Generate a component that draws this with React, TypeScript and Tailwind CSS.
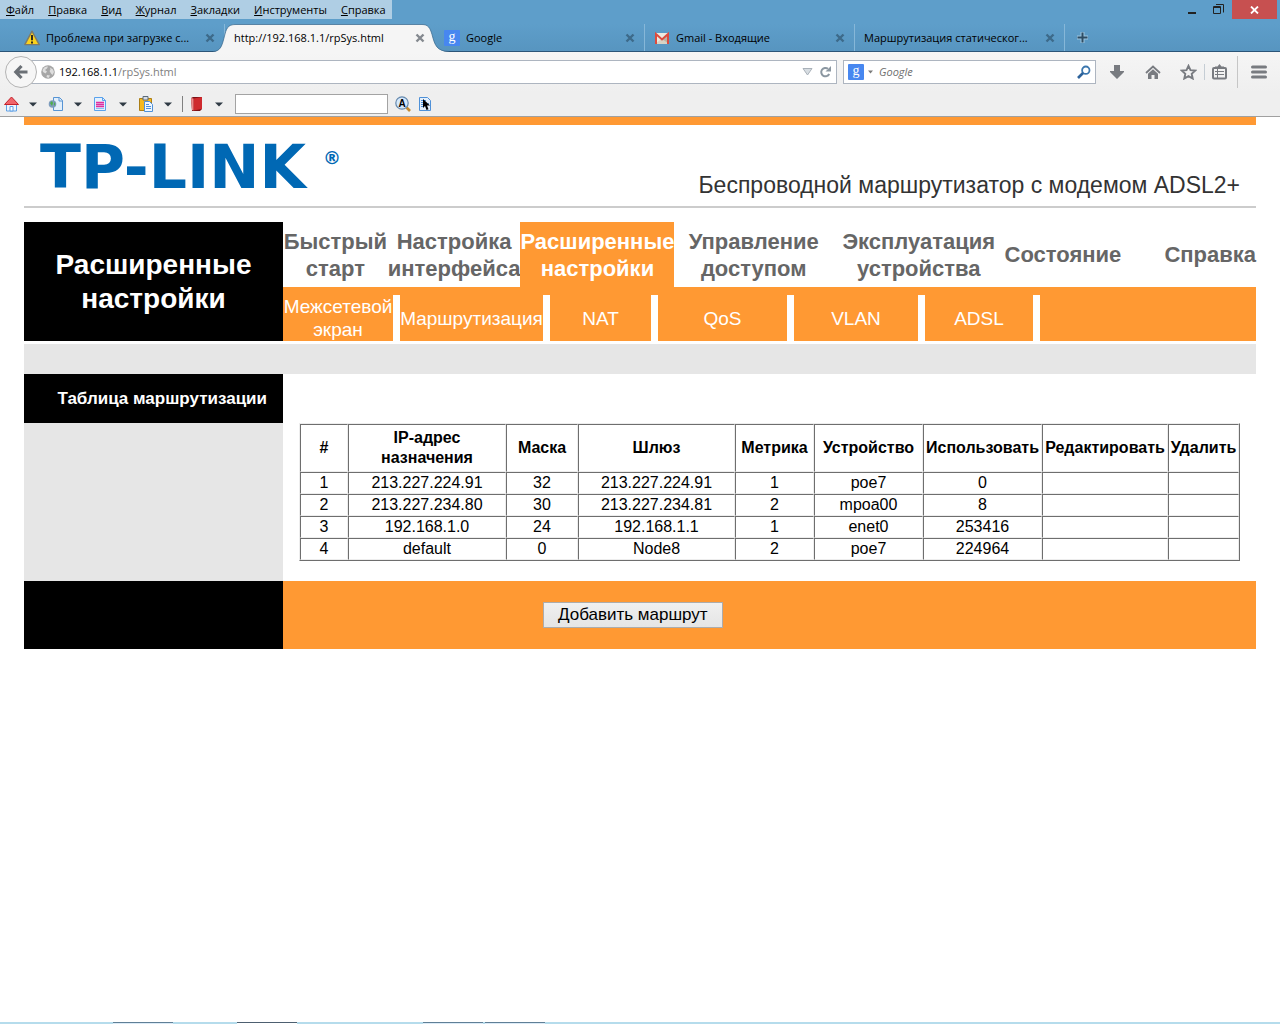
import type { ReactNode } from "react";

const menuItems = [
  ["Ф", "айл"],
  ["П", "равка"],
  ["В", "ид"],
  ["Ж", "урнал"],
  ["З", "акладки"],
  ["И", "нструменты"],
  ["С", "правка"],
];

const sections = [
  "Быстрый старт",
  "Настройка интерфейса",
  "Расширенные настройки",
  "Управление доступом",
  "Эксплуатация устройства",
  "Состояние",
  "Справка",
];

const subsections = ["Межсетевой экран", "Маршрутизация", "NAT", "QoS", "VLAN", "ADSL"];

const columns = [
  { title: "#", width: "w-[48px]" },
  { title: "IP-адрес назначения", width: "w-[158px]" },
  { title: "Маска", width: "w-[72px]" },
  { title: "Шлюз", width: "w-[157px]" },
  { title: "Метрика", width: "w-[79px]" },
  { title: "Устройство", width: "w-[109px]" },
  { title: "Использовать", width: "w-[119px]" },
  { title: "Редактировать", width: "w-[126px]" },
  { title: "Удалить", width: "w-[71px]" },
];

const routes = [
  ["1", "213.227.224.91", "32", "213.227.224.91", "1", "poe7", "0", "", ""],
  ["2", "213.227.234.80", "30", "213.227.234.81", "2", "mpoa00", "8", "", ""],
  ["3", "192.168.1.0", "24", "192.168.1.1", "1", "enet0", "253416", "", ""],
  ["4", "default", "0", "Node8", "2", "poe7", "224964", "", ""],
];

function GoogleIcon() {
  return (
    <svg width="16" height="16" viewBox="0 0 16 16" className="shrink-0">
      <rect width="16" height="16" rx="1" fill="#4787f0" />
      <text x="8" y="11" textAnchor="middle" fontFamily="Liberation Serif, serif" fontSize="14" fill="#fff">
        g
      </text>
    </svg>
  );
}

function WarningIcon() {
  return (
    <svg width="16" height="16" viewBox="0 0 16 16" className="shrink-0">
      <path d="M8 1.2 15.2 14.6H.8Z" fill="#fbd21c" stroke="#7d7a68" strokeWidth="1.4" strokeLinejoin="round" />
      <path d="M8 5v5.2M8 11.6v1.8" stroke="#1c1c1c" strokeWidth="1.8" />
    </svg>
  );
}

function GmailIcon() {
  return (
    <svg width="16" height="16" viewBox="0 0 16 16" className="shrink-0">
      <path d="M1 3h14v11H1Z" fill="#ece9e0" />
      <path d="m1 14 7-5.500L15 14Z" fill="#d8d3c5" />
      <path d="M8 9 15 3v11Z" fill="#b9b4a6" />
      <path d="M2 14V4l6 5.500L14 4v10" fill="none" stroke="#dd4b3e" strokeWidth="2" />
    </svg>
  );
}

function CloseIcon() {
  return (
    <svg width="10" height="10" viewBox="0 0 10 10">
      <path d="m1.500 1.500 7 7m0-7-7 7" stroke="currentColor" strokeWidth="2.400" />
    </svg>
  );
}

function Tab({ title, icon, active }: { title: string; icon?: ReactNode; active?: boolean }) {
  return (
    <div
      className={
        active
          ? "relative z-10 flex w-[210px] items-center pr-[10px] pl-[9px]"
          : "flex w-[210px] items-center border-r border-[#86b7d8] px-[9px]"
      }
    >
      {active && (
        <svg className="absolute top-0 -left-3 -z-10" width="236" height="29" viewBox="0 0 236 29">
          <path
            d="M0 28C8 27 9 22 12 10 14 2 17 .5 23 .5H209c6 0 8 3 10 10C222 22 224 27 236 28v1H0Z"
            fill="#f5f5f5"
          />
          <path
            d="M0 27.500C8 27 9 22 12 10 14 2 17 .5 23 .5H209c6 0 8 3 10 10C222 22 224 27 236 27.500"
            fill="none"
            stroke="#35658a"
            strokeOpacity=".7"
          />
        </svg>
      )}
      <a href="#" className="flex min-w-0 grow items-center gap-[6px]">
        {icon}
        <span className="truncate">{title}</span>
      </a>
      <button aria-label="Закрыть вкладку" className={active ? "text-[#84898f]" : "text-[#3d6a8a]"}>
        <CloseIcon />
      </button>
    </div>
  );
}

function TitleBar() {
  return (
    <div className="flex h-[24px] items-start justify-between">
      <nav className="flex h-[19px] items-center gap-[14px] bg-[#afcee4] px-[6px]">
        {menuItems.map(([key, rest]) => (
          <a key={rest + key} href="#">
            <span className="underline">{key}</span>
            {rest}
          </a>
        ))}
      </nav>
      <div className="flex h-[19px] items-center pr-[3px]">
        <button aria-label="Свернуть" className="px-2">
          <svg width="10" height="11" viewBox="0 0 10 11">
            <path d="M1 8h8v2H1Z" fill="#222" />
          </svg>
        </button>
        <button aria-label="Восстановить" className="px-2">
          <svg width="11" height="11" viewBox="0 0 11 11">
            <path d="M.5 2.500h7v7h-7ZM.5 3.500h7M3 .5h7.500v8" fill="none" stroke="#222" />
          </svg>
        </button>
        <button aria-label="Закрыть" className="flex h-[19px] w-[45px] items-center justify-center bg-[#c75050]">
          <svg width="9" height="8" viewBox="0 0 9 8">
            <path d="m1 .5 7 7m0-7-7 7" stroke="#fff" strokeWidth="1.800" />
          </svg>
        </button>
      </div>
    </div>
  );
}

function TabStrip() {
  return (
    <div className="flex h-[28px] items-stretch border-b border-[#2b5578] bg-linear-to-b from-[#5e9eca] to-[#5795c0] pl-[15px]">
      <Tab title="Проблема при загрузке с..." icon={<WarningIcon />} />
      <Tab title="http://192.168.1.1/rpSys.html" active />
      <Tab title="Google" icon={<GoogleIcon />} />
      <Tab title="Gmail - Входящие" icon={<GmailIcon />} />
      <Tab title="Маршрутизация статическог..." />
      <button aria-label="Новая вкладка" className="px-3">
        <svg width="11" height="11" viewBox="0 0 11 11">
          <path d="M5.500 0v11M0 5.500h11" stroke="#9cc5e0" strokeWidth="4" />
          <path d="M5.500 .5v10M.5 5.500h10" stroke="#2e4d63" strokeWidth="2" />
        </svg>
      </button>
    </div>
  );
}

function AddressBar() {
  return (
    <div className="flex h-[40px] items-center bg-linear-to-b from-[#f5f5f5] to-[#efefef] pr-[13px] pl-[5px]">
      <button
        aria-label="Назад"
        className="z-10 flex size-8 shrink-0 items-center justify-center rounded-full border border-[#b4b4b4] bg-[#f6f6f6]"
      >
        <svg width="16" height="16" viewBox="0 0 16 16">
          <path d="M8.500 2 2.800 8l5.700 6M3 8h11.500" fill="none" stroke="#6b7076" strokeWidth="3.200" />
        </svg>
      </button>
      <div className="-ml-2 flex h-[24px] min-w-0 grow items-center border border-[#adb5c0] bg-white pr-[5px] pl-[10px]">
        <svg width="16" height="16" viewBox="0 0 16 16" className="shrink-0">
          <circle cx="8" cy="8" r="6.800" fill="#a6a6a6" />
          <path
            d="M2.500 6C4 3 6 2 8 2.500L7 4.500 5 6l2 1.500L5.500 9.500 3 8ZM10 3.500l3 2L14 8l-1.500 3L11 9.500 9.500 7l1-1.500ZM7 11l3 .5L8.500 14 6.500 13Z"
            fill="#dedede"
          />
        </svg>
        <label htmlFor="address" className="pl-[3px]">
          192.168.1.1
        </label>
        <input id="address" defaultValue="/rpSys.html" className="min-w-0 grow text-[#808080] outline-none" />
        <button aria-label="Журнал адресов">
          <svg width="11" height="8" viewBox="0 0 11 8">
            <path d="M1 .5h9L5.500 7Z" fill="#d7dde2" stroke="#a9b1b9" />
          </svg>
        </button>
        <button aria-label="Обновить" className="pl-[6px]">
          <svg width="12" height="12" viewBox="0 0 12 12">
            <path d="M9 2.800A4.200 4.200 0 1 0 10.200 8" fill="none" stroke="#8b97a1" strokeWidth="2" />
            <path d="M6.500 5.500H12V0Z" fill="#8b97a1" />
          </svg>
        </button>
      </div>
      <form className="ml-[6px] flex h-[24px] w-[253px] shrink-0 items-center border border-[#adb5c0] bg-white px-1">
        <GoogleIcon />
        <svg width="5" height="4" viewBox="0 0 5 4" className="mx-1">
          <path d="M0 .5h5L2.500 3.500Z" fill="#7b7b7b" />
        </svg>
        <input
          aria-label="Поиск"
          placeholder="Google"
          className="ml-[2px] min-w-0 grow italic outline-none placeholder:text-[#6f6f6f]"
        />
        <button aria-label="Найти">
          <svg width="14" height="14" viewBox="0 0 14 14">
            <circle cx="8.800" cy="5.200" r="3.700" fill="none" stroke="#3b76ad" strokeWidth="1.800" />
            <path d="m6 8-5 5" stroke="#2d629b" strokeWidth="2.600" />
          </svg>
        </button>
      </form>
      <div className="flex shrink-0 items-center text-[#787b80]">
        <button aria-label="Загрузки" className="ml-[14px]">
          <svg width="14" height="14" viewBox="0 0 14 14">
            <path d="M4 0h6v6h4v1l-7 7-7-7V6h4Z" fill="currentColor" />
          </svg>
        </button>
        <button aria-label="Домашняя страница" className="ml-[21px]">
          <svg width="16" height="14" viewBox="0 0 16 14">
            <path d="M1 8 8 1.500 15 8" fill="none" stroke="currentColor" strokeWidth="1.800" />
            <path d="M3 8.800 8 4.300l5 4.500V14H9.500v-4h-3v4H3Z" fill="currentColor" />
          </svg>
        </button>
        <button aria-label="Добавить закладку" className="ml-[19px]">
          <svg width="17" height="16" viewBox="0 0 17 16">
            <path
              d="m8.500 1.800 2 4.300 4.700.5-3.500 3.200 1 4.700-4.200-2.400-4.200 2.400 1-4.700L1.800 6.600l4.700-.5Z"
              fill="none"
              stroke="currentColor"
              strokeWidth="1.900"
            />
          </svg>
        </button>
        <button aria-label="Закладки" className="ml-[7px] border-l border-[#c5cdd4] pl-[7px]">
          <svg width="15" height="16" viewBox="0 0 15 16">
            <path d="M3 4V2.500h2.500L7.500 0l2 2.500H12V4Z" fill="currentColor" />
            <rect x="1" y="4" width="13" height="10.500" rx="1" fill="none" stroke="currentColor" strokeWidth="2" />
            <path d="M3 7.500h9M3 10.500h9M5.500 5v9" stroke="currentColor" />
          </svg>
        </button>
        <button aria-label="Меню" className="ml-[10px] flex h-8 items-center border-l border-[#c6c6c6] pl-[13px]">
          <svg width="16" height="14" viewBox="0 0 16 14">
            <path d="M1.500 2h13m-13 5h13m-13 5h13" stroke="currentColor" strokeWidth="3" strokeLinecap="round" />
          </svg>
        </button>
      </div>
    </div>
  );
}

function DropArrow() {
  return (
    <svg width="8" height="5" viewBox="0 0 8 5">
      <path d="M0 .5h8L4 4.500Z" fill="#2f3a44" />
    </svg>
  );
}

function ToolButton({ label, children }: { label: string; children: ReactNode }) {
  return (
    <button aria-label={label} className="flex w-[45px] items-center gap-[10px]">
      <svg width="16" height="16" viewBox="0 0 16 16">
        {children}
      </svg>
      <DropArrow />
    </button>
  );
}

function ToolBar() {
  return (
    <div className="flex h-[25px] items-center border-b border-[#a0a0a0] bg-[#efefef] pl-[3px]">
      <ToolButton label="Домой">
        <path d="M3.500 8h10v7h-10Z" fill="#eef5fc" stroke="#5ea0e6" />
        <path d="M8.500 1 15.500 8.500h-14Z" fill="#f0656a" stroke="#c4222b" />
        <path d="M7 10.500h3V15H7Z" fill="#fff" stroke="#5ea0e6" />
      </ToolButton>
      <ToolButton label="Открыть страницу">
        <path d="M5.500 1.500h6l3 3v10h-9Z" fill="#e3effb" stroke="#5794d4" />
        <path d="M11 1.500V5h3.500" fill="none" stroke="#5794d4" />
        <circle cx="4.500" cy="8" r="3.800" fill="#7d9cbd" />
        <path d="M2 7l2-2 1 2-1 3M6 6l1.500 2L6 10" fill="#4fae4b" />
      </ToolButton>
      <ToolButton label="Страница">
        <path d="M1.500 1.500h8l3 3v10h-11Z" fill="#e4f0fd" stroke="#5aa2ec" />
        <path d="M9.500 1.500v3h3" fill="none" stroke="#5aa2ec" />
        <path d="M3 6.500h8M3 8.500h8m-8 2h8" stroke="#e02fa0" strokeWidth="1.400" />
        <path d="M3 12.500h8" stroke="#8cbcf0" />
      </ToolButton>
      <ToolButton label="Буфер обмена">
        <path d="M1.500 2.500h12v12h-12Z" fill="#f6b91d" stroke="#ab7e16" />
        <path d="M5 .5h5V4H5Z" fill="#d9dde2" stroke="#5a6b7c" />
        <path d="M6.500 5.500h5l3 3v7h-8Z" fill="#eff6fe" stroke="#4f91d8" />
        <path d="M8 8.500h3M8 10.500h5m-5 2h5" stroke="#4f91d8" />
      </ToolButton>
      <div className="-ml-px flex items-center border-l border-[#808080] pl-[6px]">
        <ToolButton label="Словарь">
          <path d="M2 2 4 1h9v12l-2 2H3Z" fill="#7d1116" />
          <path d="M4.500 2.500 13 1v12l-8.500 1.500Z" fill="#cf2a2e" />
          <path d="M2 2l2.500.5v12L3 14Z" fill="#f08a8a" />
        </ToolButton>
      </div>
      <input
        aria-label="Слово для перевода"
        className="ml-px h-[20px] w-[153px] border border-[#a3a3a3] bg-white px-1 outline-none"
      />
      <button aria-label="Перевести" className="ml-[7px]">
        <svg width="16" height="16" viewBox="0 0 16 16">
          <path d="m11.500 11.500 3.500 3.500" stroke="#c58a2e" strokeWidth="2.600" />
          <circle cx="7" cy="7" r="6.200" fill="#d5e8fb" stroke="#6689ad" strokeWidth="1.200" />
          <text x="7" y="10.500" textAnchor="middle" fontFamily="Liberation Sans, sans-serif" fontWeight="700" fontSize="10">
            A
          </text>
        </svg>
      </button>
      <button aria-label="Перевод под курсором" className="ml-[7px]">
        <svg width="16" height="16" viewBox="0 0 16 16">
          <path d="M1.500 1.500h8l3 3v10h-11Z" fill="#e4f0fd" stroke="#4f91d8" />
          <path d="M3 4.500h5m-5 2h2m-2 2h2m-2 2h2M10 7.500h1" stroke="#4f91d8" />
          <path d="M5 3v9l2-2 1.500 4 2-.8L9 9.500h3Z" fill="#000" />
        </svg>
      </button>
    </div>
  );
}

function Logo() {
  return (
    <svg width="304" height="72" viewBox="0 0 304 72" fill="#0068b4" fontFamily="DejaVu Sans, sans-serif">
      <text x="0" y="58" fontSize="60" fontWeight="700">
        TP-LINK
      </text>
      <text x="283" y="34" fontSize="18" fontWeight="700">
        ®
      </text>
    </svg>
  );
}

function RoutingTable() {
  return (
    <table className="w-full table-fixed border-separate border-spacing-0 border border-t-[#ededed] border-r-[#6e6e6e] border-b-[#6e6e6e] border-l-[#ededed] text-center text-[16px] leading-[20px]">
      <colgroup>
        {columns.map((col) => (
          <col key={col.title} className={col.width} />
        ))}
      </colgroup>
      <thead>
        <tr className="h-[48px]">
          {columns.map((col) => (
            <th
              key={col.title}
              className="border border-t-[#6e6e6e] border-r-[#ededed] border-b-[#ededed] border-l-[#6e6e6e] font-bold"
            >
              {col.title}
            </th>
          ))}
        </tr>
      </thead>
      <tbody>
        {routes.map((route) => (
          <tr key={route[0]} className="h-[22px]">
            {route.map((value, i) => (
              <td
                key={i}
                className="border border-t-[#6e6e6e] border-r-[#ededed] border-b-[#ededed] border-l-[#6e6e6e]"
              >
                {value}
              </td>
            ))}
          </tr>
        ))}
      </tbody>
    </table>
  );
}

function RouterPage() {
  return (
    <main className="px-6 font-['Liberation_Sans',Arial,sans-serif]">
      <header className="flex h-[91px] items-end justify-between border-t-8 border-b-2 border-t-[#ff9933] border-b-[#cccccc] px-4">
        <div className="self-start pt-[5px]">
          <Logo />
        </div>
        <p className="pb-[7px] text-[23px] leading-[28px] text-[#333]">
          Беспроводной маршрутизатор с модемом ADSL2+
        </p>
      </header>

      <div className="mt-[14px] flex">
        <h1 className="flex w-[259px] shrink-0 items-center justify-center bg-black px-6 text-center text-[28px] leading-[34px] font-bold text-white">
          Расширенные настройки
        </h1>
        <div className="grow">
          <nav className="grid h-[65px] grid-cols-[105fr_133fr_154fr_159fr_172fr_115fr_135fr] text-center text-[22px] leading-[27px] font-bold text-[#666]">
            {sections.map((section) => (
              <a
                key={section}
                href="#"
                className={
                  section === "Расширенные настройки"
                    ? "flex items-center justify-center bg-[#ff9933] text-white"
                    : section === "Справка"
                      ? "flex items-center justify-end"
                      : "flex items-center justify-center"
                }
              >
                {section}
              </a>
            ))}
          </nav>
          <div className="bg-[#ff9933] pt-2">
            <nav className="grid h-[46px] grid-cols-[117fr_150fr_108fr_136fr_131fr_115fr_216fr] text-center text-[19px] leading-[23px] text-white">
              {subsections.map((name) => (
                <a key={name} href="#" className="flex items-center justify-center border-r-[7px] border-white">
                  {name}
                </a>
              ))}
            </nav>
          </div>
        </div>
      </div>

      <div className="mt-[3px] h-[30px] bg-[#e6e6e6]" />

      <div className="flex">
        <div className="w-[259px] shrink-0 bg-[#e6e6e6]">
          <h2 className="flex h-[49px] items-center justify-end bg-black pr-4 text-[17px] font-bold text-white">
            Таблица маршрутизации
          </h2>
        </div>
        <div className="min-w-0 grow px-4 pt-[49px] pb-5">
          <RoutingTable />
        </div>
      </div>

      <div className="flex h-[68px] bg-[#ff9933]">
        <div className="w-[259px] shrink-0 bg-black" />
        <div className="pt-[21px] pl-[260px]">
          <button className="h-[26px] border border-[#acacac] bg-linear-to-b from-[#f0f0f0] to-[#e5e5e5] px-[14px] text-[17px] leading-[24px]">
            Добавить маршрут
          </button>
        </div>
      </div>
    </main>
  );
}

// Only the top edge of the desktop taskbar shows below the window
function TaskbarEdge() {
  return (
    <footer className="mt-auto flex h-[2px] bg-[#b5dcec] pl-[113px]">
      <div className="w-[60px] border-t border-[#5f7f96] bg-[#dcebf7]" />
      <div className="ml-16 w-[60px] border-t border-[#4d5f70] bg-white" />
      <div className="ml-[126px] w-[60px] border-t border-[#5f7f96] bg-[#dcebf7]" />
      <div className="ml-[2px] w-[60px] border-t border-[#5f7f96] bg-[#dcebf7]" />
    </footer>
  );
}

export default function App() {
  return (
    <div className="flex min-h-screen flex-col bg-white text-black">
      <div className="font-['Open_Sans','Noto_Sans',sans-serif] text-[11px] leading-[16px]">
        <div className="bg-[#5e9eca]">
          <TitleBar />
          <TabStrip />
        </div>
        <AddressBar />
        <ToolBar />
      </div>
      <RouterPage />
      <TaskbarEdge />
    </div>
  );
}
